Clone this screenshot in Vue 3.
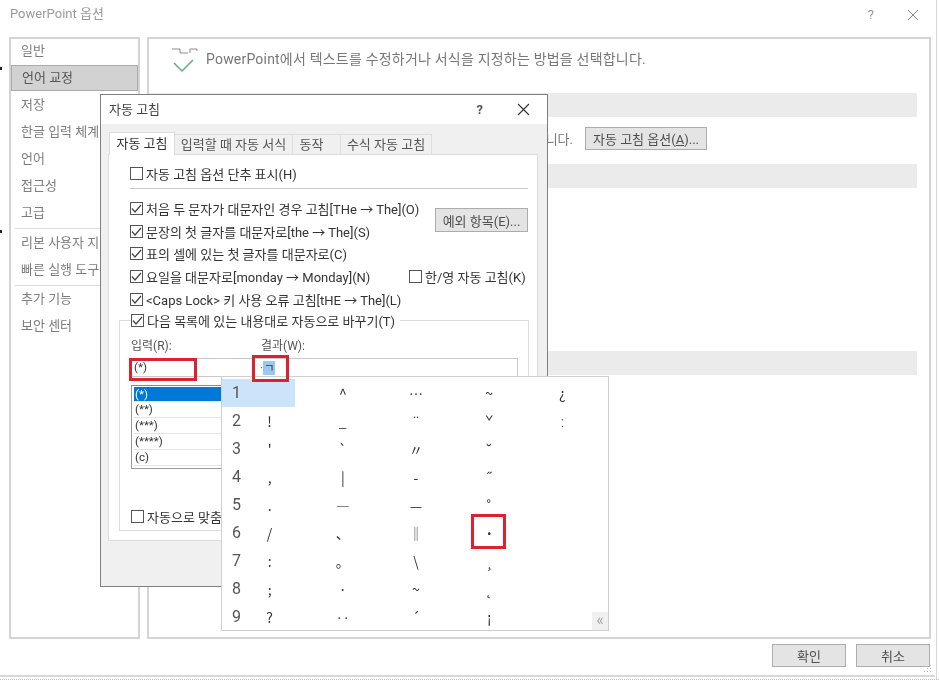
<script setup>
const navTop = ['일반', '언어 교정', '저장', '한글 입력 체계', '언어', '접근성', '고급']
const navMid = ['리본 사용자 지', '빠른 실행 도구']
const navEnd = ['추가 기능', '보안 센터']
const tabs = ['자동 고침', '입력할 때 자동 서식', '동작', '수식 자동 고침']
const checks = [
  '처음 두 문자가 대문자인 경우 고침[THe → The](O)',
  '문장의 첫 글자를 대문자로[the → The](S)',
  '표의 셀에 있는 첫 글자를 대문자로(C)',
  '요일을 대문자로[monday → Monday](N)',
  '<Caps Lock> 키 사용 오류 고침[tHE → The](L)'
]
const list = ['(*)', '(**)', '(***)', '(****)', '(c)']
const rows = [
  ['1', '', '^', '…', '~', '¿'],
  ['2', '!', '_', '¨', 'ˇ', 'ː'],
  ['3', "'", '`', '〃', '˘', ''],
  ['4', ',', '|', '-', '˝', ''],
  ['5', '.', '―', '—', '˚', ''],
  ['6', '/', '、', '‖', '˙', ''],
  ['7', ':', '。', '\\', '¸', ''],
  ['8', ';', '·', '~', '˛', ''],
  ['9', '?', '‥', '´', '¡', '']
]
</script>

<template>
  <div class="desk">
    <section class="outer">
      <header class="outer-title">
        <span>PowerPoint 옵션</span>
        <span class="outer-actions">
          <span class="help">?</span>
          <svg width="12" height="12" viewBox="0 0 12 12"><path d="M1 1l10 10M11 1L1 11" stroke="#8a8a8a" fill="none" /></svg>
        </span>
      </header>
      <div class="outer-body">
        <nav class="nav">
          <div v-for="n in navTop" :key="n" class="nav-item" :class="{ on: n === '언어 교정' }">{{ n }}</div>
          <div class="nav-rule"></div>
          <div v-for="n in navMid" :key="n" class="nav-item">{{ n }}</div>
          <div class="nav-rule last"></div>
          <div v-for="n in navEnd" :key="n" class="nav-item">{{ n }}</div>
        </nav>
        <main class="main">
          <div class="intro">
            <svg class="intro-icon" width="28" height="26" viewBox="0 0 28 26">
              <path d="M1 2h8v4h8M19 6V2h7v2" stroke="#8c8c8c" fill="none" />
              <path d="M3 16l8 8L22 13" stroke="#5fae83" stroke-width="1.5" fill="none" />
            </svg>
            <span>PowerPoint에서 텍스트를 수정하거나 서식을 지정하는 방법을 선택합니다.</span>
          </div>
          <div class="bar"></div>
          <div class="auto-row">
            <span class="auto-text">니다.</span>
            <button class="btn auto-btn">자동 고침 옵션(<u>A</u>)...</button>
          </div>
          <div class="bar second"></div>
          <div class="bar third"></div>
        </main>
      </div>
      <footer class="outer-foot">
        <button class="btn foot-btn">확인</button>
        <button class="btn foot-btn">취소</button>
      </footer>
    </section>

    <div class="dots"></div>
    <div class="edge"></div>
    <div class="speck speck-a"></div>
    <div class="speck speck-b"></div>
    <svg class="grip" width="10" height="9" viewBox="0 0 10 9">
      <path d="M8 1h1v1H8zM5 4h1v1H5zM8 4h1v1H8zM2 7h1v1H2zM5 7h1v1H5zM8 7h1v1H8z" fill="#bdbdbd" />
    </svg>

    <section class="dialog">
      <header class="dlg-title">
        <span class="dlg-name">자동 고침</span>
        <span class="dlg-actions">
          <span class="dlg-help">?</span>
          <svg width="13" height="13" viewBox="0 0 13 13"><path d="M1 1l11 11M12 1L1 12" stroke="#333" stroke-width="1.1" fill="none" /></svg>
        </span>
      </header>
      <div class="dlg-body">
        <div class="tabs">
          <span v-for="(t, i) in tabs" :key="t" class="tab" :class="['tab' + i, { active: i === 0 }]">{{ t }}</span>
        </div>
        <div class="panel">
          <label class="check-row first"><i class="box"></i>자동 고침 옵션 단추 표시(H)</label>
          <div class="rule"></div>
          <div class="check-block">
            <div class="checks">
              <label v-for="c in checks" :key="c" class="check-row">
                <i class="box">
                  <svg width="13" height="13" viewBox="0 0 13 13"><path d="M2 6.5l3 3.5 6-7" stroke="#444" stroke-width="1.2" fill="none" /></svg>
                </i>{{ c }}
              </label>
            </div>
            <button class="btn exc-btn">예외 항목(E)...</button>
            <label class="check-row hanyoung"><i class="box"></i>한/영 자동 고침(K)</label>
          </div>
          <div class="group">
            <label class="check-row legend">
              <i class="box">
                <svg width="13" height="13" viewBox="0 0 13 13"><path d="M2 6.5l3 3.5 6-7" stroke="#444" stroke-width="1.2" fill="none" /></svg>
              </i>다음 목록에 있는 내용대로 자동으로 바꾸기(T)
            </label>
            <div class="labels"><span class="lab-a">입력(R):</span><span>결과(W):</span></div>
            <div class="inputs">
              <span class="inp-a">(*)</span>
              <span class="inp-b">·<mark>ㄱ</mark></span>
            </div>
            <ul class="list">
              <li v-for="(l, i) in list" :key="l" :class="{ sel: i === 0 }">{{ l }}</li>
            </ul>
            <label class="check-row spell"><i class="box"></i>자동으로 맞춤</label>
          </div>
        </div>
      </div>
    </section>

    <div class="mark mark-a"></div>
    <div class="mark mark-b"></div>

    <section class="popup">
      <div v-for="r in rows" :key="r[0]" class="cand-row">
        <span v-for="(c, i) in r" :key="i" :class="i === 0 ? 'num' : 'sym'">{{ c }}</span>
      </div>
      <span class="more">«</span>
      <div class="mark mark-c"></div>
    </section>
  </div>
</template>

<style>
html, body { margin: 0; background: #fff; overflow: hidden; }
</style>

<style scoped>
.desk {
  position: relative;
  width: 939px;
  height: 685px;
  overflow: hidden;
  background: #fff;
  font-family: Roboto, "Noto Sans CJK KR", sans-serif;
  font-size: 13px;
  color: #333;
  filter: blur(0.5px);
}
.outer {
  width: 935px;
  height: 677px;
  box-sizing: border-box;
  padding: 0 4px 0 9px;
  border-bottom: 2px solid #d8d8d8;
  display: flex;
  flex-direction: column;
  color: #7d7d7d;
}
.outer-title {
  height: 37px;
  flex: none;
  display: flex;
  justify-content: space-between;
  align-items: flex-start;
  padding: 3px 0 0 1px;
  box-sizing: border-box;
  color: #9a9a9a;
}
.outer-actions { display: flex; align-items: center; gap: 33px; padding: 4px 12px 0 0; }
.help { color: #999; }
.outer-body { display: flex; gap: 7px; height: 602px; flex: none; }
.nav {
  width: 131px;
  box-sizing: border-box;
  border: 2px solid #d4d4d4;
}
.nav-item {
  height: 27px;
  line-height: 25px;
  padding-left: 10px;
  box-sizing: border-box;
  white-space: nowrap;
}
.nav-item:first-child { height: 26px; line-height: 24px; }
.nav-item.on {
  height: 26px;
  margin-bottom: 1px;
  line-height: 23px;
  background: #d2d2d2;
  border: 1px solid #ababab;
  padding-left: 10px;
  color: #555;
}
.nav-rule { height: 1px; margin: 1px 0 1px 4px; background: #ddd; }
.nav-rule.last { margin: 1px 0 0 4px; }
.main {
  flex: 1;
  box-sizing: border-box;
  border: 2px solid #d4d4d4;
  padding: 0 12px 0 0;
}
.intro {
  height: 54px;
  display: flex;
  align-items: flex-start;
  padding: 8px 0 0 22px;
  box-sizing: border-box;
  gap: 7px;
  font-size: 14px;
  letter-spacing: 0.2px;
  color: #777;
}
.intro span { padding-top: 1px; }
.intro-icon { flex: none; }
.bar { height: 24px; background: #ebebeb; }
.second { margin-top: 14px; }
.third { margin-top: 163px; }
.auto-row {
  width: 558px;
  height: 23px;
  margin-top: 10px;
  display: flex;
  align-items: center;
}
.auto-text {
  flex: 1;
  min-width: 0;
  text-align: right;
  white-space: nowrap;
  color: #777;
  padding-right: 12px;
}
.btn {
  font: inherit;
  border: 1px solid #acacac;
  background: #e4e4e4;
  color: #4e4e4e;
  padding: 0;
  box-sizing: border-box;
  white-space: nowrap;
}
.auto-btn { width: 122px; height: 23px; flex: none; }
.outer-foot {
  display: flex;
  justify-content: flex-end;
  gap: 10px;
  padding: 5px 1px 0 0;
}
.foot-btn { width: 74px; height: 23px; }
.dots {
  position: absolute;
  left: 0;
  right: 0;
  top: 679px;
  height: 0;
  border-top: 1px dotted #bcbcbc;
}
.edge {
  position: absolute;
  left: 936px;
  top: 0;
  width: 1px;
  height: 679px;
  background: #d8d8d8;
}
.speck { position: absolute; left: 0; width: 2px; height: 3px; background: #222; }
.speck-a { top: 67px; }
.speck-b { top: 230px; }
.grip { position: absolute; left: 922px; top: 664px; }
.dialog {
  position: absolute;
  left: 100px;
  top: 94px;
  width: 448px;
  height: 493px;
  box-sizing: border-box;
  border: 1px solid #7f7f7f;
  background: #f0f0f0;
  display: flex;
  flex-direction: column;
  color: #333;
}
.dlg-title {
  height: 29px;
  flex: none;
  background: #fff;
  display: flex;
  justify-content: space-between;
  align-items: center;
  padding: 0 17px 0 8px;
  color: #444;
}
.dlg-name { margin-top: -3px; }
.dlg-actions { display: flex; align-items: center; gap: 34px; }
.dlg-help { font-weight: 700; color: #555; }
.dlg-body { flex: 1; padding: 9px 9px 0 7px; }
.tabs { display: flex; height: 22px; padding-left: 1px; }
.tab {
  box-sizing: border-box;
  height: 21px;
  margin-top: 1px;
  border: 1px solid #dedede;
  border-bottom: none;
  border-left: none;
  line-height: 19px;
  white-space: nowrap;
  text-align: center;
  color: #555;
}
.tab0 { width: 66px; }
.tab1 { width: 118px; }
.tab2 { width: 48px; padding-right: 10px; }
.tab3 { width: 91px; }
.tab.active {
  height: 23px;
  margin-top: -1px;
  line-height: 22px;
  background: #fff;
  border: 1px solid #dcdcdc;
  border-bottom: none;
  color: #333;
  position: relative;
  z-index: 1;
}
.panel {
  height: 387px;
  box-sizing: border-box;
  background: #fff;
  border: 1px solid #dcdcdc;
  padding: 7px 9px 0 21px;
  margin-top: -1px;
}
.check-row {
  display: flex;
  align-items: center;
  gap: 3px;
  height: 23px;
  white-space: nowrap;
}
.box {
  width: 13px;
  height: 13px;
  flex: none;
  border: 1px solid #555;
  box-sizing: border-box;
  background: #fff;
  display: block;
}
.box svg { display: block; margin: -1px; }
.rule { height: 1px; background: #c9c9c9; margin: 3px 0 8px; }
.check-block { position: relative; }
.checks .check-row { height: 22.75px; }
.exc-btn {
  position: absolute;
  right: 0;
  top: 11px;
  width: 93px;
  height: 24px;
}
.hanyoung { position: absolute; left: 279px; top: 68px; }
.group {
  position: relative;
  margin: 9px 0 0 -11px;
  width: 410px;
  height: 211px;
  box-sizing: border-box;
  border: 1px solid #dcdcdc;
  padding: 0 10px 0 11px;
}
.legend {
  position: absolute;
  left: 11px;
  top: -12px;
  background: #fff;
  padding-right: 5px;
}
.labels { display: flex; padding-top: 15px; height: 37px; box-sizing: border-box; font-size: 12px; color: #555; }
.lab-a { width: 130px; }
.inputs {
  height: 19px;
  display: flex;
  align-items: center;
  border: 1px solid #c9c9c9;
  border-left: none;
  box-sizing: border-box;
  font-size: 11.5px;
}
.inp-a { width: 129px; padding-left: 3px; box-sizing: border-box; }
.inp-b { color: #555; }
.inp-b mark { background: #99c9ef; color: #333; padding: 0 0 0 1px; }
.list {
  list-style: none;
  margin: 8px 0 0;
  padding: 1px 0 0 2px;
  height: 84px;
  box-sizing: border-box;
  border: 1px solid #9a9a9a;
  border-top-color: #888;
  font-size: 11.5px;
}
.list li {
  height: 16px;
  line-height: 15px;
  padding-left: 1px;
  border-bottom: 1px solid #e4e4e4;
  box-sizing: border-box;
}
.list li.sel { background: #0078d7; color: #fff; height: 15px; }
.spell { margin-top: 36px; }
.popup {
  position: absolute;
  left: 221px;
  top: 376px;
  width: 388px;
  height: 255px;
  box-sizing: border-box;
  border: 1px solid #cfcfcf;
  background: #fff;
  padding-top: 2px;
}
.cand-row {
  height: 28px;
  display: grid;
  grid-template-columns: 11px repeat(5, 73.2px);
  align-items: center;
  color: #444;
}
.cand-row:first-child { background: linear-gradient(#cce4fa, #cce4fa) no-repeat 0 0 / 73px 100%; }
.num {
  grid-row: 1;
  grid-column: 1 / 3;
  line-height: 28px;
  padding-left: 10px;
  font-size: 16px;
  color: #555;
}
.sym {
  grid-row: 1;
  text-align: center;
  line-height: 28px;
  font-size: 14px;
  font-family: "Noto Sans CJK KR", sans-serif;
  color: #333;
  white-space: nowrap;
}
.sym:nth-child(2) { grid-column: 2; }
.sym:nth-child(3) { grid-column: 3; }
.sym:nth-child(4) { grid-column: 4; }
.sym:nth-child(5) { grid-column: 5; }
.sym:nth-child(6) { grid-column: 6; }
.more {
  position: absolute;
  right: 0;
  bottom: 0;
  width: 16px;
  height: 18px;
  background: #f0f0f0;
  color: #a8a8a8;
  font-size: 16px;
  line-height: 16px;
  text-align: center;
}
.mark {
  position: absolute;
  box-sizing: border-box;
  border: 3px solid #d92331;
  z-index: 5;
}
.mark-a { left: 129px; top: 358px; width: 68px; height: 23px; }
.mark-b { left: 252px; top: 355px; width: 37px; height: 27px; }
.mark-c { left: 249px; top: 137px; width: 35px; height: 35px; }
</style>
